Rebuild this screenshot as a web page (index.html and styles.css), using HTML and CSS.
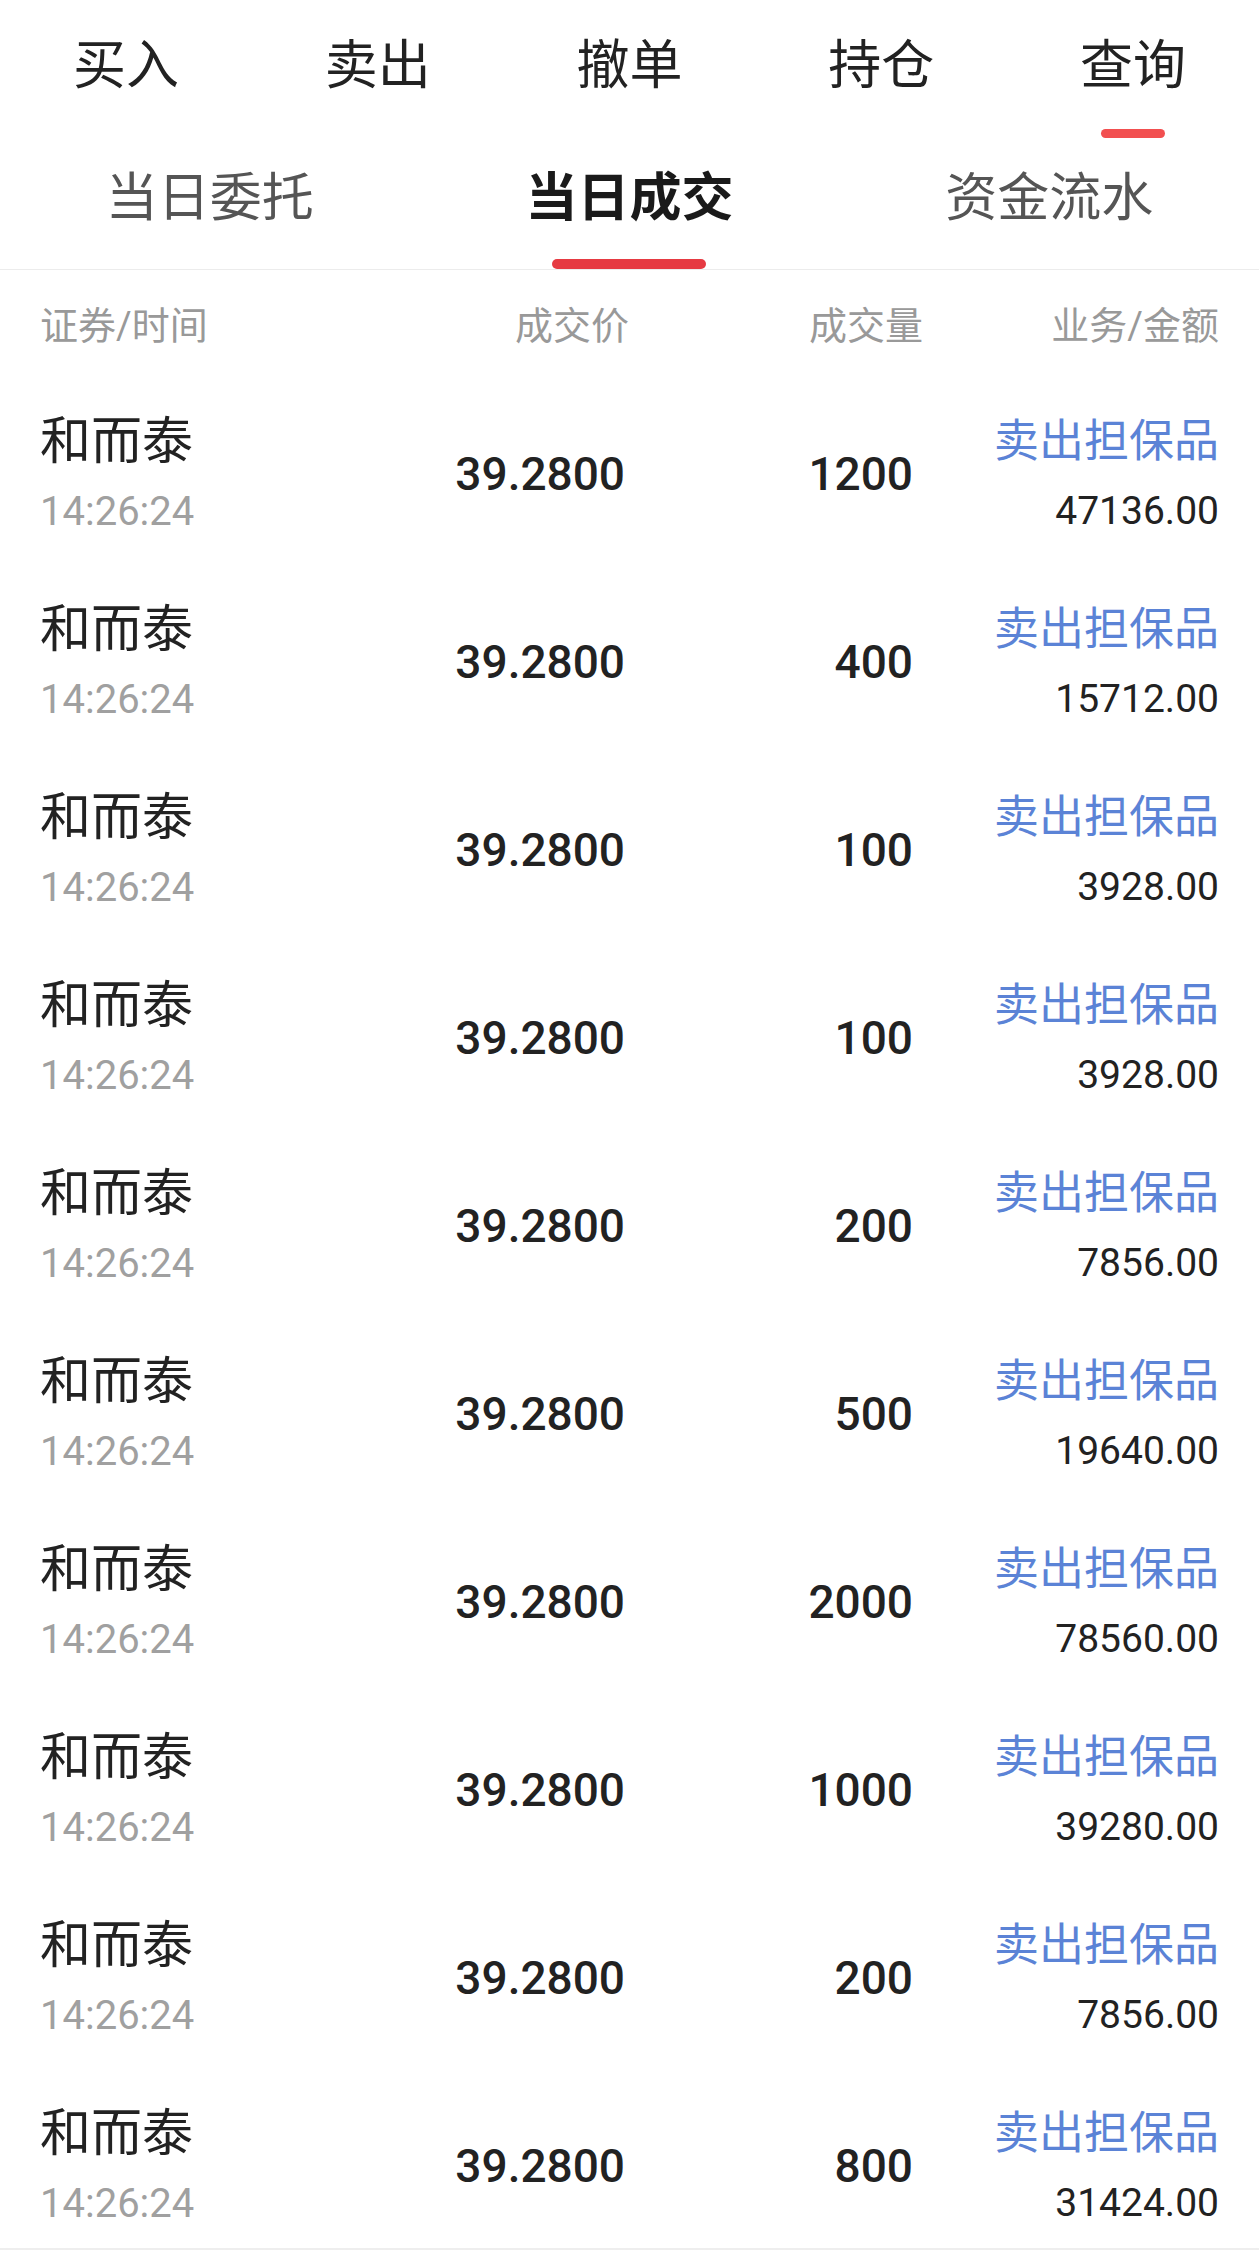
FILE: index.html
```html
<!DOCTYPE html>
<html lang="zh-CN">

    <head>
        <meta charset="UTF-8">
        <meta name="viewport" content="width=device-width, initial-scale=1.0">
        <title>当日成交</title>
        <link rel="stylesheet" href="styles.css">
    </head>

    <body>
        <div class="page">
            <nav class="main-tabs">
                <div class="main-tab"><span class="main-tab-text">买入</span></div>
                <div class="main-tab"><span class="main-tab-text">卖出</span></div>
                <div class="main-tab"><span class="main-tab-text">撤单</span></div>
                <div class="main-tab"><span class="main-tab-text">持仓</span></div>
                <div class="main-tab active"><span class="main-tab-text">查询</span><i class="main-bar"></i></div>
            </nav>

            <nav class="sub-tabs">
                <div class="sub-tab"><span class="sub-tab-text">当日委托</span></div>
                <div class="sub-tab active"><span class="sub-tab-text">当日成交</span><i class="sub-bar"></i></div>
                <div class="sub-tab"><span class="sub-tab-text">资金流水</span></div>
            </nav>

            <div class="list-head">
                <div class="col-name">证券/时间</div>
                <div class="col-price">成交价</div>
                <div class="col-qty">成交量</div>
                <div class="col-biz">业务/金额</div>
            </div>

            <div class="list" id="list"></div>
        </div>

        <script>
            var trades = [
                { qty: 1200, amount: '47136.00' },
                { qty: 400, amount: '15712.00' },
                { qty: 100, amount: '3928.00' },
                { qty: 100, amount: '3928.00' },
                { qty: 200, amount: '7856.00' },
                { qty: 500, amount: '19640.00' },
                { qty: 2000, amount: '78560.00' },
                { qty: 1000, amount: '39280.00' },
                { qty: 200, amount: '7856.00' },
                { qty: 800, amount: '31424.00' }
            ]

            var list = document.getElementById('list')
            trades.forEach(function (t) {
                var row = document.createElement('div')
                row.className = 'trade-row'
                row.innerHTML =
                    '<div class="col-name"><div class="stock-name">和而泰</div><div class="trade-time">14:26:24</div></div>' +
                    '<div class="col-price"><span class="num">39.2800</span></div>' +
                    '<div class="col-qty"><span class="num qty">' + t.qty + '</span></div>' +
                    '<div class="col-biz"><div class="biz-type">卖出担保品</div><div class="biz-amount">' + t.amount + '</div></div>'
                list.appendChild(row)
            })
        </script>
    </body>

</html>
```

FILE: styles.css
```css
* {
    box-sizing: border-box;
}

body {
    margin: 0;
    background: #ffffff;
    font-family: Roboto, "Noto Sans CJK SC", sans-serif;
    color: #222222;
}

.page {
    width: 1259px;
}

/* top tabs */
.main-tabs {
    display: grid;
    grid-template-columns: repeat(5, 1fr);
    height: 138px;
}

.main-tab {
    display: flex;
    flex-direction: column;
    align-items: center;
    padding-top: 34px;
}

.main-tab-text {
    font-size: 53px;
    line-height: 64px;
    color: #222222;
}

.main-bar {
    display: block;
    width: 64px;
    height: 9px;
    margin-top: 31px;
    border-radius: 5px;
    background: #f24f50;
}

/* sub tabs */
.sub-tabs {
    display: grid;
    grid-template-columns: repeat(3, 1fr);
    padding-top: 29px;
    border-bottom: 1px solid #ececec;
}

.sub-tab {
    display: flex;
    flex-direction: column;
    align-items: center;
}

.sub-tab-text {
    font-size: 52px;
    line-height: 64px;
    color: #555555;
}

.sub-tab.active .sub-tab-text {
    color: #1a1a1a;
    font-weight: 700;
}

.sub-tab::after {
    content: "";
    display: block;
    height: 38px;
}

.sub-tab.active::after {
    display: none;
}

.sub-bar {
    display: block;
    width: 154px;
    height: 10px;
    margin-top: 28px;
    margin-bottom: -1px;
    border-radius: 5px;
    background: #e63a42;
}

/* columns */
.list-head,
.trade-row {
    display: grid;
    grid-template-columns: 300px 289px 294px 1fr;
    padding: 0 40px;
}

.col-price,
.col-qty,
.col-biz {
    text-align: right;
}

.list-head {
    height: 98px;
    align-items: center;
    padding-top: 6px;
    font-size: 38px;
    color: #999999;
}

/* rows */
.list {
    border-bottom: 2px solid #eeeeee;
}

.trade-row {
    height: 188px;
    align-items: center;
    padding-top: 24px;
}

.stock-name {
    font-size: 51px;
    line-height: 60px;
    color: #222222;
}

.trade-time {
    margin-top: 16px;
    font-size: 40px;
    line-height: 48px;
    color: #a0a0a0;
}

.num {
    font-size: 46px;
    font-weight: 500;
    color: #222222;
}

.col-price .num {
    padding-right: 4px;
}

.qty {
    padding-right: 10px;
}

.biz-type {
    font-size: 45px;
    line-height: 56px;
    color: #5b83d6;
}

.biz-amount {
    margin-top: 18px;
    font-size: 39px;
    line-height: 46px;
    color: #222222;
}
```
